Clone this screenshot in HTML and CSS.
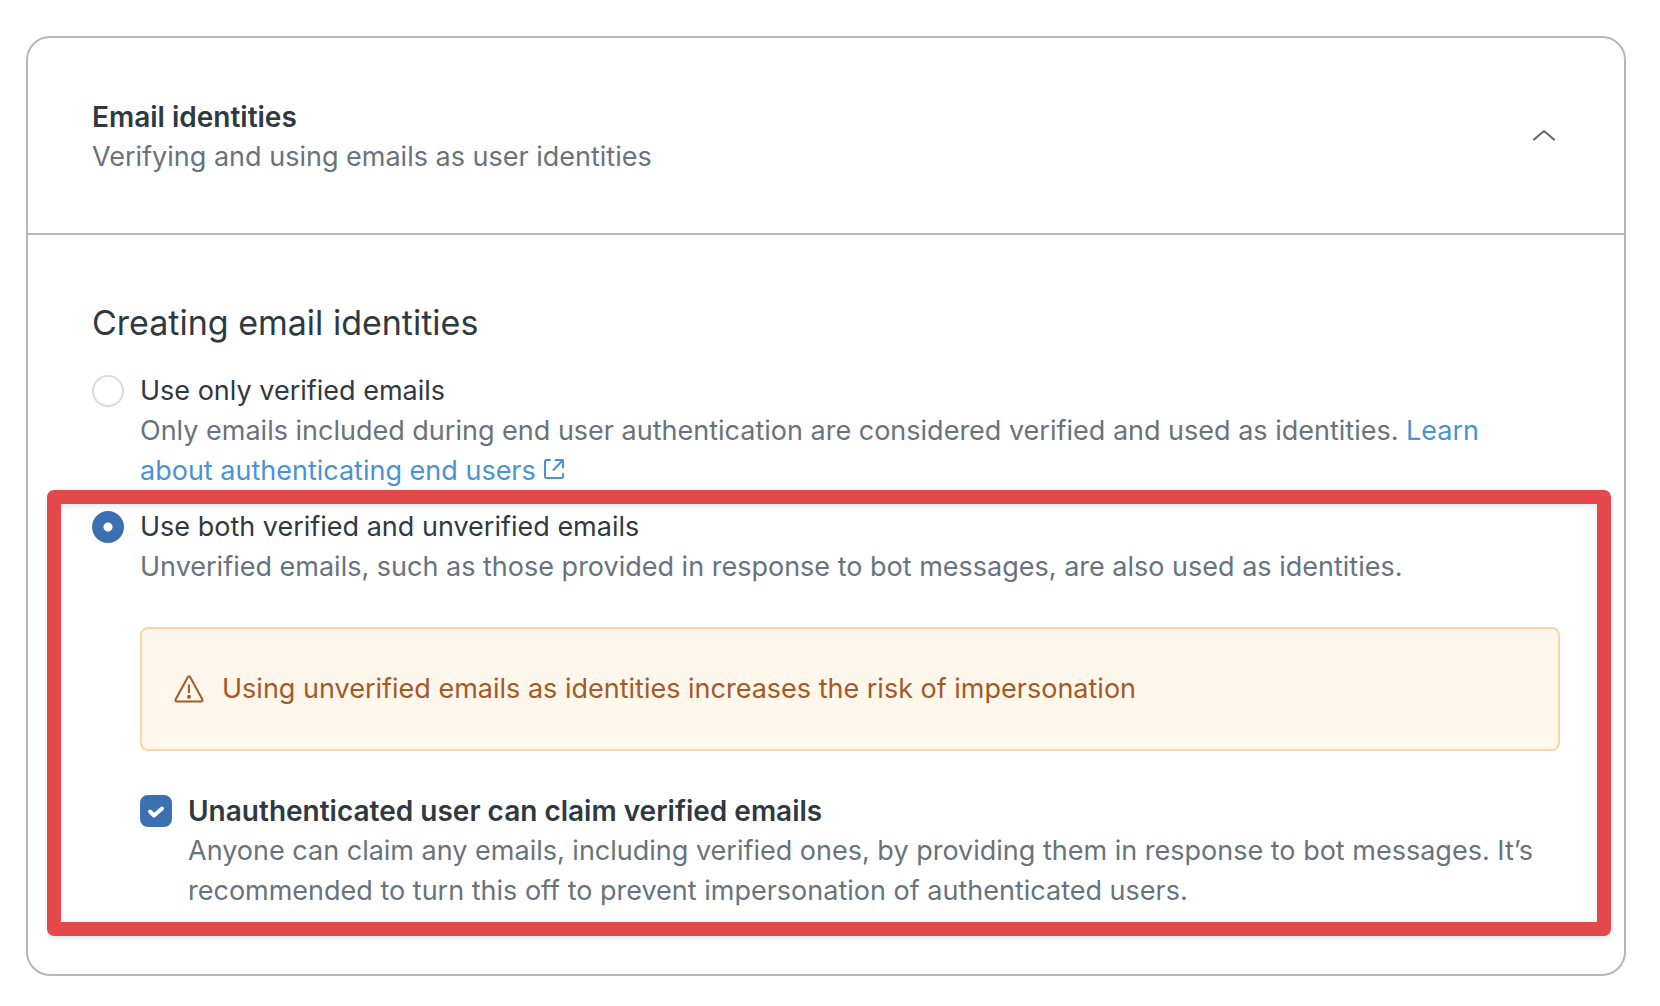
FILE: index.html
```html
<!DOCTYPE html>
<html lang="en">
	<head>
		<meta charset="UTF-8">
		<title>Email identities</title>
		<link rel="stylesheet" href="styles.css">
	</head>
	<body>
		<section class="card">
			<header class="card-header">
				<div>
					<h2 class="title">Email identities</h2>
					<p class="desc">Verifying and using emails as user identities</p>
				</div>
				<button class="toggle" type="button" aria-label="Collapse" aria-expanded="true">
					<svg viewBox="0 0 32 32" width="32" height="32"><path d="M6 18.500L16 10l10 8.500"/></svg>
				</button>
			</header>
			<form class="card-body">
				<h3 class="heading">Creating email identities</h3>
				<div class="option">
					<input class="radio" type="radio" name="identity" id="verified">
					<div class="content">
						<label class="label" for="verified">Use only verified emails</label>
						<p class="desc">Only emails included during end user authentication are considered verified and used as identities. <a class="link" href="#">Learn<br>about authenticating end users <svg class="external" viewBox="0 0 22 22" width="22" height="22"><path d="M7 2H3.500Q2 2 2 3.500V18.500Q2 20 3.500 20H18.500Q20 20 20 18.500V16M12.500 2H20V9.500M20 2L10.500 12"/></svg></a></p>
					</div>
				</div>
				<div class="option marked">
					<input class="radio" type="radio" name="identity" id="both" checked>
					<div class="content">
						<label class="label" for="both">Use both verified and unverified emails</label>
						<p class="desc">Unverified emails, such as those provided in response to bot messages, are also used as identities.</p>
						<div class="warning">
							<svg class="warning-icon" viewBox="0 0 32 32" width="32" height="32">
								<path d="M13.800 4.300Q15 2.200 16.200 4.300L28.300 26.300Q29.200 28.500 27 28.500H3Q0.800 28.500 1.700 26.300Z"/>
								<path d="M15 11.500V20"/>
								<circle cx="15" cy="23.700" r="2"/>
							</svg>
							<p>Using unverified emails as identities increases the risk of impersonation</p>
						</div>
						<div class="option">
							<input class="checkbox" type="checkbox" id="claim" checked>
							<div class="content">
								<label class="label strong" for="claim">Unauthenticated user can claim verified emails</label>
								<p class="desc">Anyone can claim any emails, including verified ones, by providing them in response to bot messages. It’s recommended to turn this off to prevent impersonation of authenticated users.</p>
							</div>
						</div>
					</div>
				</div>
			</form>
		</section>
	</body>
</html>
```

FILE: styles.css
```css
*{
	padding: 0;
	margin: 0;
	box-sizing: border-box;
}
body{
	padding: 36px 34px 30px 26px;
	background: #fff;
	color: #2f3941;
	font: 27px/40px Inter, "Liberation Sans", sans-serif;
}
.card{
	border: 2px solid #b0b8be;
	border-radius: 24px;
}
.card-header{
	display: flex;
	align-items: center;
	justify-content: space-between;
	padding: 59px 64px 56px;
	border-bottom: 2px solid #b0b8be;
}
.title{
	font-size: 28px;
	font-weight: 600;
}
.desc{
	color: #68737d;
}
.toggle{
	width: 32px;
	height: 32px;
	border: 0;
	background: none;
	cursor: pointer;
}
.toggle svg{
	display: block;
	fill: none;
	stroke: #5c6770;
	stroke-width: 2;
	stroke-linecap: round;
	stroke-linejoin: round;
}
.card-body{
	padding: 64px 64px 63px;
}
.heading{
	margin-bottom: 24px;
	font-size: 34px;
	font-weight: 400;
	line-height: 48px;
}
.option{
	display: flex;
	gap: 16px;
}
.content{
	flex: 1;
}
.label{
	display: block;
}
.strong{
	font-size: 28px;
	font-weight: 600;
}
.link{
	color: #4a93d3;
	text-decoration: none;
}
.external{
	fill: none;
	stroke: currentColor;
	stroke-width: 2;
	stroke-linecap: round;
	stroke-linejoin: round;
}
.radio, .checkbox{
	appearance: none;
	flex: none;
	width: 32px;
	height: 32px;
	margin-top: 4px;
	border: 2px solid #d8dcde;
	background: #fff;
}
.radio{
	border-radius: 50%;
}
.radio:checked{
	border-color: #3b70b2;
	background: radial-gradient(circle, #fff 4px, #3b70b2 5px);
}
.checkbox{
	border-radius: 8px;
}
.checkbox:checked{
	border-color: #3b70b2;
	background: #3b70b2 url("data:image/svg+xml,%3Csvg xmlns='http://www.w3.org/2000/svg' viewBox='0 0 28 28'%3E%3Cpath d='M8 14.500l4 4 8-7' fill='none' stroke='white' stroke-width='4' stroke-linecap='round' stroke-linejoin='round'/%3E%3C/svg%3E");
}
.marked{
	position: relative;
	margin-top: 16px;
}
/* red frame drawn over the card around the selected option */
.marked::after{
	content: "";
	position: absolute;
	inset: -17px -51px -25px -45px;
	border: 14px solid #e4484b;
	border-radius: 7px;
	box-shadow: 0 3px 6px rgba(0,0,0,.08), inset 0 3px 6px rgba(0,0,0,.08);
	pointer-events: none;
}
.warning{
	display: flex;
	align-items: center;
	gap: 16px;
	margin: 40px 0;
	padding: 40px 32px;
	border: 2px solid #f8d6a8;
	border-radius: 8px;
	background: #fff6ec;
	color: #a35a26;
}
.warning-icon{
	flex: none;
	fill: none;
	stroke: currentColor;
	stroke-width: 2;
}
.warning-icon circle{
	fill: currentColor;
	stroke: none;
}
```
